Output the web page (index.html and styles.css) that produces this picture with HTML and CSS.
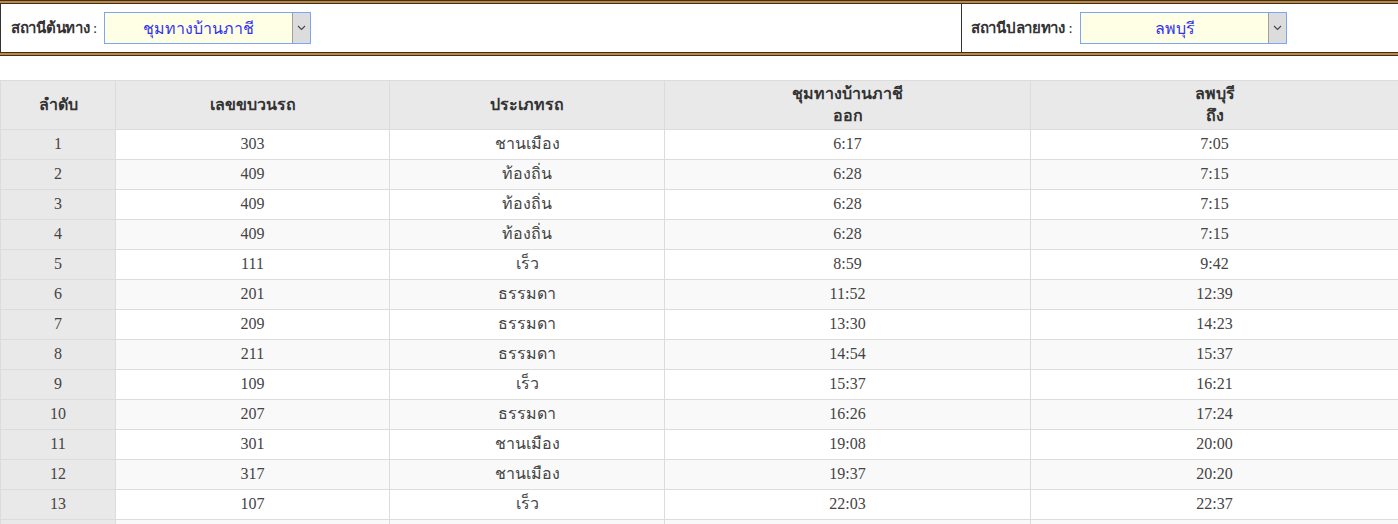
FILE: index.html
```html
<!DOCTYPE html>
<html>
<head>
<meta charset="utf-8">
<link rel="stylesheet" href="styles.css">
</head>
<body>
<div class="bar">
  <div class="bar-inner">
    <div class="cell cell-left">
      <span class="label">สถานีต้นทาง</span><span class="colon"> : </span>
      <div class="select"><span class="select-text">ชุมทางบ้านภาชี</span><span class="select-btn"><svg width="9" height="6" viewBox="0 0 9 6"><path d="M1 1 L4.5 4.5 L8 1" fill="none" stroke="#444" stroke-width="1.1"/></svg></span></div>
    </div>
    <div class="cell cell-right">
      <span class="label">สถานีปลายทาง</span><span class="colon"> : </span>
      <div class="select"><span class="select-text">ลพบุรี</span><span class="select-btn"><svg width="9" height="6" viewBox="0 0 9 6"><path d="M1 1 L4.5 4.5 L8 1" fill="none" stroke="#444" stroke-width="1.1"/></svg></span></div>
    </div>
  </div>
</div>

<table class="tt">
  <colgroup>
    <col class="c1"><col class="c2"><col class="c3"><col class="c4"><col class="c5">
  </colgroup>
  <thead>
    <tr>
      <th>ลำดับ</th>
      <th>เลขขบวนรถ</th>
      <th>ประเภทรถ</th>
      <th>ชุมทางบ้านภาชี<br>ออก</th>
      <th>ลพบุรี<br>ถึง</th>
    </tr>
  </thead>
  <tbody>
    <tr><td class="no">1</td><td>303</td><td>ชานเมือง</td><td>6:17</td><td>7:05</td></tr>
    <tr><td class="no">2</td><td>409</td><td>ท้องถิ่น</td><td>6:28</td><td>7:15</td></tr>
    <tr><td class="no">3</td><td>409</td><td>ท้องถิ่น</td><td>6:28</td><td>7:15</td></tr>
    <tr><td class="no">4</td><td>409</td><td>ท้องถิ่น</td><td>6:28</td><td>7:15</td></tr>
    <tr><td class="no">5</td><td>111</td><td>เร็ว</td><td>8:59</td><td>9:42</td></tr>
    <tr><td class="no">6</td><td>201</td><td>ธรรมดา</td><td>11:52</td><td>12:39</td></tr>
    <tr><td class="no">7</td><td>209</td><td>ธรรมดา</td><td>13:30</td><td>14:23</td></tr>
    <tr><td class="no">8</td><td>211</td><td>ธรรมดา</td><td>14:54</td><td>15:37</td></tr>
    <tr><td class="no">9</td><td>109</td><td>เร็ว</td><td>15:37</td><td>16:21</td></tr>
    <tr><td class="no">10</td><td>207</td><td>ธรรมดา</td><td>16:26</td><td>17:24</td></tr>
    <tr><td class="no">11</td><td>301</td><td>ชานเมือง</td><td>19:08</td><td>20:00</td></tr>
    <tr><td class="no">12</td><td>317</td><td>ชานเมือง</td><td>19:37</td><td>20:20</td></tr>
    <tr><td class="no">13</td><td>107</td><td>เร็ว</td><td>22:03</td><td>22:37</td></tr>
    <tr class="last"><td class="no"></td><td></td><td></td><td></td><td></td></tr>
  </tbody>
</table>
</body>
</html>
```

FILE: styles.css
```css
html, body {
  margin: 0;
  padding: 0;
  background: #fff;
}
body {
  font-family: "Liberation Serif", "Noto Sans", serif;
  color: #444;
}
.bar {
  border-top: 1px solid #333;
  border-bottom: 1px solid #333;
}
.bar-inner {
  display: flex;
  border-top: 2px solid #c8872f;
  border-bottom: 2px solid #c8872f;
}
.cell {
  display: flex;
  align-items: center;
  border-top: 1px solid #333;
  border-bottom: 1px solid #333;
  box-sizing: border-box;
  height: 50px;
}
.cell-left {
  width: 962px;
  border-left: 1px solid #333;
  border-right: 1px solid #333;
  padding-left: 10px;
}
.cell-right {
  flex: 1;
  padding-left: 9px;
}
.label {
  font-weight: bold;
  font-size: 15px;
  letter-spacing: -0.3px;
  color: #333;
}
.colon {
  font-size: 15px;
  color: #333;
  white-space: pre;
}
.select {
  display: flex;
  width: 207px;
  height: 32px;
  box-sizing: border-box;
  border: 1px solid #7aa6f5;
  background: #ffffe6;
  margin-left: 3px;
}
.cell-right .select {
  margin-left: 4px;
}
.select-text {
  flex: 1;
  display: flex;
  align-items: center;
  justify-content: center;
  color: #3333ee;
  font-size: 16px;
}
.select-btn {
  width: 17px;
  background: #dcdcdc;
  border-left: 1px solid #a0a0a0;
  display: flex;
  align-items: center;
  justify-content: center;
}
.tt {
  margin-top: 24px;
  width: 1398px;
  border-collapse: collapse;
  table-layout: fixed;
  font-size: 16px;
}
.c1 { width: 115px; }
.c2 { width: 274px; }
.c3 { width: 275px; }
.c4 { width: 366px; }
.c5 { width: 368px; }
.tt th, .tt td {
  border: 1px solid #dcdcdc;
  text-align: center;
  padding: 0;
}
.tt th {
  background: #e9e9e9;
  color: #333;
  font-weight: bold;
  height: 48px;
  line-height: 22px;
}
.tt td {
  height: 28px;
  line-height: 20px;
  padding-bottom: 1px;
}
.tt tbody tr:nth-child(even) td { background: #f9f9f9; }
.tt tbody td.no { background: #e9e9e9; }
.tt tbody tr:nth-child(even) td.no { background: #e9e9e9; }
```
